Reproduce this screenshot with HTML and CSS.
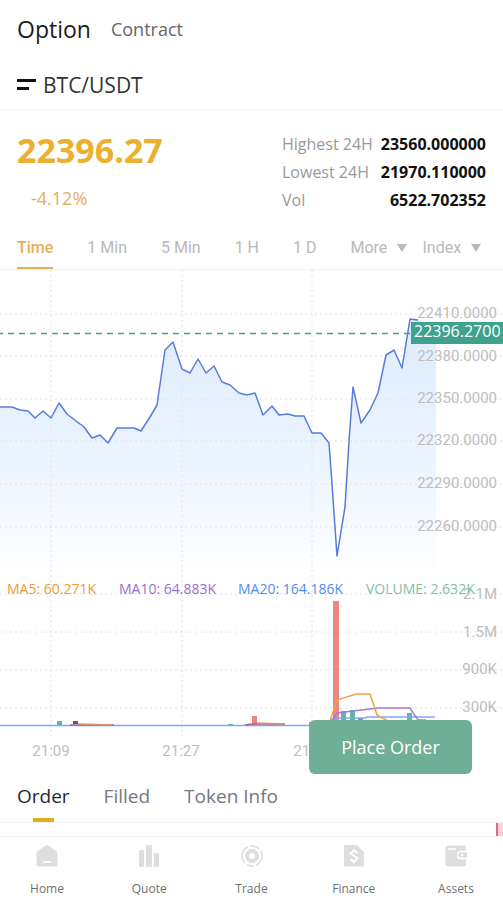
FILE: index.html
```html
<!DOCTYPE html>
<html lang="en">
<head>
<meta charset="utf-8">
<meta name="viewport" content="width=device-width, initial-scale=1">
<title>BTC/USDT Option</title>
<link rel="stylesheet" href="styles.css">
</head>
<body>
<main class="page">
  <nav class="modes" aria-label="Trading mode">
    <a class="mode mode-active" href="#option">Option</a>
    <a class="mode" href="#contract">Contract</a>
  </nav>

  <header class="pair">
    <button class="pair-menu" type="button" aria-label="Choose pair">
      <svg width="20" height="14" viewBox="0 0 20 14"><path d="M0 2.5h19M0 10.500h12" stroke="#111" stroke-width="3" fill="none"/></svg>
    </button>
    <h1 class="pair-name">BTC/USDT</h1>
  </header>

  <section class="summary">
    <div>
      <div class="price">22396.27</div>
      <div class="change">-4.12%</div>
    </div>
    <dl class="stats">
      <div class="stat"><dt>Highest 24H</dt><dd>23560.000000</dd></div>
      <div class="stat"><dt>Lowest 24H</dt><dd>21970.110000</dd></div>
      <div class="stat"><dt>Vol</dt><dd>6522.702352</dd></div>
    </dl>
  </section>

  <div class="periods">
    <button class="period period-active" type="button">Time</button>
    <button class="period" type="button">1 Min</button>
    <button class="period" type="button">5 Min</button>
    <button class="period" type="button">1 H</button>
    <button class="period" type="button">1 D</button>
    <div class="drops">
      <div class="drop">
        <select aria-label="More periods"><option>More</option></select>
        <svg width="12" height="8" viewBox="0 0 12 8"><path d="M1 0h10L6 8z" fill="#b9b9b9"/></svg>
      </div>
      <div class="drop">
        <select aria-label="Index"><option>Index</option></select>
        <svg width="12" height="8" viewBox="0 0 12 8"><path d="M1 0h10L6 8z" fill="#b9b9b9"/></svg>
      </div>
    </div>
  </div>

  <section class="chart">
    <svg class="plot" viewBox="0 270 503 500" role="img" aria-label="Price and volume chart">
      <defs>
        <linearGradient id="area" x1="0" y1="333" x2="0" y2="580" gradientUnits="userSpaceOnUse">
          <stop offset="0" stop-color="#e0edfc"/>
          <stop offset=".5" stop-color="#ebf4ff"/>
          <stop offset="1" stop-color="#ffffff"/>
        </linearGradient>
      </defs>
      <path fill="url(#area)" d="M0 407H12L20 410L28 411L35 418L43 411L51 418L59 403L67 414L76 421L84 427L92 438L100 435L108 443L117 428H134L141 431L150 417L157 405L165 350L173 342L182 369L190 373L198 359L206 373L214 366L222 382L230 385L239 393L247 395L255 393L263 415L272 406L279 415L288 414L295 416H304L312 433H321L329 443L332 484L337 556L345 507L349 441L353 387L361 423L370 410L378 393L386 355L394 350L402 368L410 319H418L436 333V580H0Z"/>
      <path class="grid" d="M0 314H503M0 356H503M0 399H503M0 441H503M0 484H503M0 527H503M0 594H503M0 632H503M0 670H503M0 708H503M51 270V736M182 270V736M312 270V736"/>
      <path class="price-line" d="M0 407H12L20 410L28 411L35 418L43 411L51 418L59 403L67 414L76 421L84 427L92 438L100 435L108 443L117 428H134L141 431L150 417L157 405L165 350L173 342L182 369L190 373L198 359L206 373L214 366L222 382L230 385L239 393L247 395L255 393L263 415L272 406L279 415L288 414L295 416H304L312 433H321L329 443L332 484L337 556L345 507L349 441L353 387L361 423L370 410L378 393L386 355L394 350L402 368L410 319L418 320"/>
      <path class="last-line" d="M-3 333.500H412"/>

      <g class="axis" text-anchor="end">
        <text x="497" y="318">22410.0000</text>
        <text x="497" y="361">22380.0000</text>
        <text x="497" y="403">22350.0000</text>
        <text x="497" y="445">22320.0000</text>
        <text x="497" y="488">22290.0000</text>
        <text x="497" y="531">22260.0000</text>
        <text x="497" y="599">2.1M</text>
        <text x="497" y="637">1.5M</text>
        <text x="497" y="674">900K</text>
        <text x="497" y="712">300K</text>
      </g>
      <g class="axis" text-anchor="middle">
        <text x="51" y="756">21:09</text>
        <text x="181" y="756">21:27</text>
        <text x="312" y="756">21:45</text>
      </g>

      <rect x="411" y="322" width="92" height="22" fill="#3fa28d"/>
      <text class="last-price" x="414" y="337">22396.2700</text>

      <g class="bars">
        <path fill="#5fb5ab" d="M57 721h5v5h-5zM228 724h5v2h-5zM341 711h5v15h-5zM350 710h5v16h-5zM407 713h5v13h-5z"/>
        <path fill="#ef8580" d="M252 716h5v10h-5zM333 601h6v125h-6zM309 722h5v4h-5z"/>
        <path fill="#6d5c55" d="M73 721h5v3h-5z"/>
        <path fill="#9b7fc4" d="M358 718h5v4h-5z"/>
      </g>
      <g fill="none" stroke-width="1.500">
        <path stroke="#7fa6f2" d="M0 725.500H320L336 718H365L367 717H435"/>
        <path stroke="#a06a9c" d="M70 725H114M245 725L252 724H285"/>
        <path stroke="#e0926e" d="M78 724L112 725M257 723L284 724"/>
        <path stroke="#a57bd6" d="M328 726L337 713L353 711L378 708H410L418 720H426"/>
        <path stroke="#f0a441" d="M328 726L332 715L337 700L356 694H370L377 715L388 721"/>
      </g>

      <g class="legend">
        <text x="7" y="594" fill="#ee9a35">MA5: 60.271K</text>
        <text x="119" y="594" fill="#9a6ed0">MA10: 64.883K</text>
        <text x="238" y="594" fill="#4e8ff0">MA20: 164.186K</text>
        <text x="366" y="594" fill="#84c0a6">VOLUME: 2.632K</text>
      </g>
    </svg>
    <button class="place-order" type="button">Place Order</button>
  </section>

  <nav class="lists" aria-label="Orders">
    <a class="list list-active" href="#order">Order</a>
    <a class="list" href="#filled">Filled</a>
    <a class="list" href="#token">Token Info</a>
  </nav>
  <div class="depth"><span class="depth-ask"></span></div>

  <nav class="tabbar" aria-label="Main">
    <a class="tab" href="#home">
      <svg width="22" height="22" viewBox="0 0 22 22"><path fill="#dedede" d="M11 0Q12 0 13 1L20 6Q21.500 7 21.500 9V19Q21.500 21.500 19 21.500H3Q.5 21.500 .5 19V9Q.5 7 2 6L9 1Q10 0 11 0Z"/><path d="M8 17h6" stroke="#fff" stroke-width="2" stroke-linecap="round"/></svg>
      Home
    </a>
    <a class="tab" href="#quote">
      <svg width="22" height="22" viewBox="0 0 22 22" fill="#dedede"><rect x="1" y="5" width="5" height="17" rx="1"/><rect x="8" y="0" width="6" height="22" rx="1"/><rect x="16" y="8" width="5" height="14" rx="1"/></svg>
      Quote
    </a>
    <a class="tab" href="#trade">
      <svg width="22" height="22" viewBox="0 0 22 22" fill="none" stroke="#dedede"><circle cx="11" cy="11" r="5" stroke-width="4"/><path stroke-width="1.500" d="M4 18A10 10 0 0 1 7 2M9 1.200A10 10 0 0 1 18 4M19.500 5.500A10 10 0 0 1 15 20M13 20.800A10 10 0 0 1 6 19.700"/></svg>
      Trade
    </a>
    <a class="tab" href="#finance">
      <svg width="22" height="22" viewBox="0 0 22 22"><path fill="#dedede" d="M2 0H14L21 7V20Q21 21.500 19.500 21.500H2Q1 21.500 1 20V1Q1 0 2 0Z"/><path d="M14.500 8L11 5L7.500 8.500L14.500 13L11 17L7.500 14M11 4V6M11 16V18" fill="none" stroke="#fff" stroke-width="2"/></svg>
      Finance
    </a>
    <a class="tab" href="#assets">
      <svg width="22" height="22" viewBox="0 0 22 22"><path fill="#dedede" d="M3 .5H19Q21 .5 21 2.500V19Q21 21.500 18.500 21.500H3Q.5 21.500 .5 19V3Q.5 .5 3 .5Z"/><path d="M3 4H11" stroke="#fff" stroke-width="1.500"/><path d="M22 6.500H16Q12.500 6.500 12.500 10T16 13.500H22" fill="#dedede" stroke="#fff" stroke-width="1.500"/><circle cx="17" cy="10" r="1.500" fill="#fff"/></svg>
      Assets
    </a>
  </nav>
</main>
</body>
</html>
```

FILE: styles.css
```css
* {
  box-sizing: border-box;
}

body {
  margin: 0;
  background: #fff;
  color: #222;
  font-family: "Open Sans", "Noto Sans", sans-serif;
}

a {
  color: inherit;
  text-decoration: none;
}

button,
select {
  margin: 0;
  padding: 0;
  border: 0;
  background: none;
  color: inherit;
  font: inherit;
}

.page {
  display: flex;
  flex-direction: column;
  min-height: 100vh;
  overflow: hidden;
}

.modes {
  display: flex;
  align-items: center;
  gap: 20px;
  height: 58px;
  padding: 0 17px;
}

.mode {
  color: #666;
  font-size: 18px;
}

.mode-active {
  color: #1c1c24;
  font-size: 23px;
}

.pair {
  display: flex;
  align-items: center;
  gap: 6px;
  height: 52px;
  padding: 2px 17px 0;
  border-bottom: 1px solid #f7f7f7;
}

.pair-menu svg {
  display: block;
}

.pair-name {
  margin: 0;
  color: #333;
  font-size: 21px;
  font-weight: 400;
}

.summary {
  display: flex;
  justify-content: space-between;
  height: 116px;
  padding: 20px 17px 0;
}

.price {
  color: #ebb02d;
  font-size: 34px;
  font-weight: 700;
  line-height: 40px;
}

.change {
  padding: 16px 0 0 14px;
  color: #e9ab5c;
  font-size: 18px;
  line-height: 24px;
}

.stats {
  width: 204px;
  margin: 0;
}

.stat {
  display: flex;
  justify-content: space-between;
  font-size: 16px;
  line-height: 28px;
  white-space: nowrap;
}

.stat dt {
  color: #999;
}

.stat dd {
  margin: 0;
  color: #111;
  font-weight: 700;
}

.periods {
  display: flex;
  gap: 34px;
  height: 44px;
  padding: 0 17px;
  border-bottom: 1px solid #f2f2f2;
  color: #b9b9b9;
  font-family: Roboto, sans-serif;
  font-size: 16px;
  white-space: nowrap;
}

.period {
  padding-top: 2px;
  border-bottom: 2px solid transparent;
}

.period-active {
  border-bottom-color: #e8ad55;
  color: #e8ad55;
  font-weight: 500;
}

.drops,
.drop {
  display: flex;
  align-items: center;
}

.drops {
  gap: 15px;
}

.drop {
  gap: 8px;
}

.drop select {
  appearance: none;
}

.chart {
  position: relative;
}

.plot {
  display: block;
  width: 100%;
}

.grid {
  fill: none;
  stroke: #e2e2e6;
  stroke-dasharray: 2 3;
}

.price-line {
  fill: none;
  stroke: #587bdc;
  stroke-width: 1.5;
  stroke-linejoin: round;
}

.last-line {
  stroke: #46a386;
  stroke-width: 1.5;
  stroke-dasharray: 6 5;
}

.axis {
  fill: #bdbdbd;
  font-family: Roboto, sans-serif;
  font-size: 15px;
}

.last-price {
  fill: #fff;
  font-size: 16px;
}

.legend {
  font-size: 14px;
}

.place-order {
  position: absolute;
  right: 31px;
  bottom: -4px;
  width: 163px;
  height: 54px;
  border-radius: 6px;
  background: #6fae97;
  color: #fff;
  font-size: 18px;
}

.lists {
  display: flex;
  gap: 34px;
  height: 53px;
  padding: 0 17px;
  border-bottom: 1px solid #f5f5f5;
}

.list {
  display: flex;
  flex-direction: column;
  align-items: center;
  justify-content: space-between;
  padding-top: 12px;
  color: #747784;
  font-size: 19px;
  line-height: 28px;
}

.list-active {
  color: #24283a;
}

.list-active::after {
  width: 21px;
  height: 4px;
  background: #e4ae1b;
  content: "";
}

.depth {
  display: flex;
  justify-content: flex-end;
  flex: 1;
  min-height: 13px;
}

.depth-ask {
  width: 7px;
  border-left: 2px solid #e5677c;
  background: #fbd0d6;
}

.tabbar {
  display: flex;
  justify-content: space-between;
  padding: 8px 24px 2px;
  border-top: 1px solid #f3f3f3;
}

.tab {
  display: flex;
  flex-direction: column;
  align-items: center;
  gap: 12px;
  width: 46px;
  color: #707070;
  font-size: 12px;
  line-height: 20px;
}
```
